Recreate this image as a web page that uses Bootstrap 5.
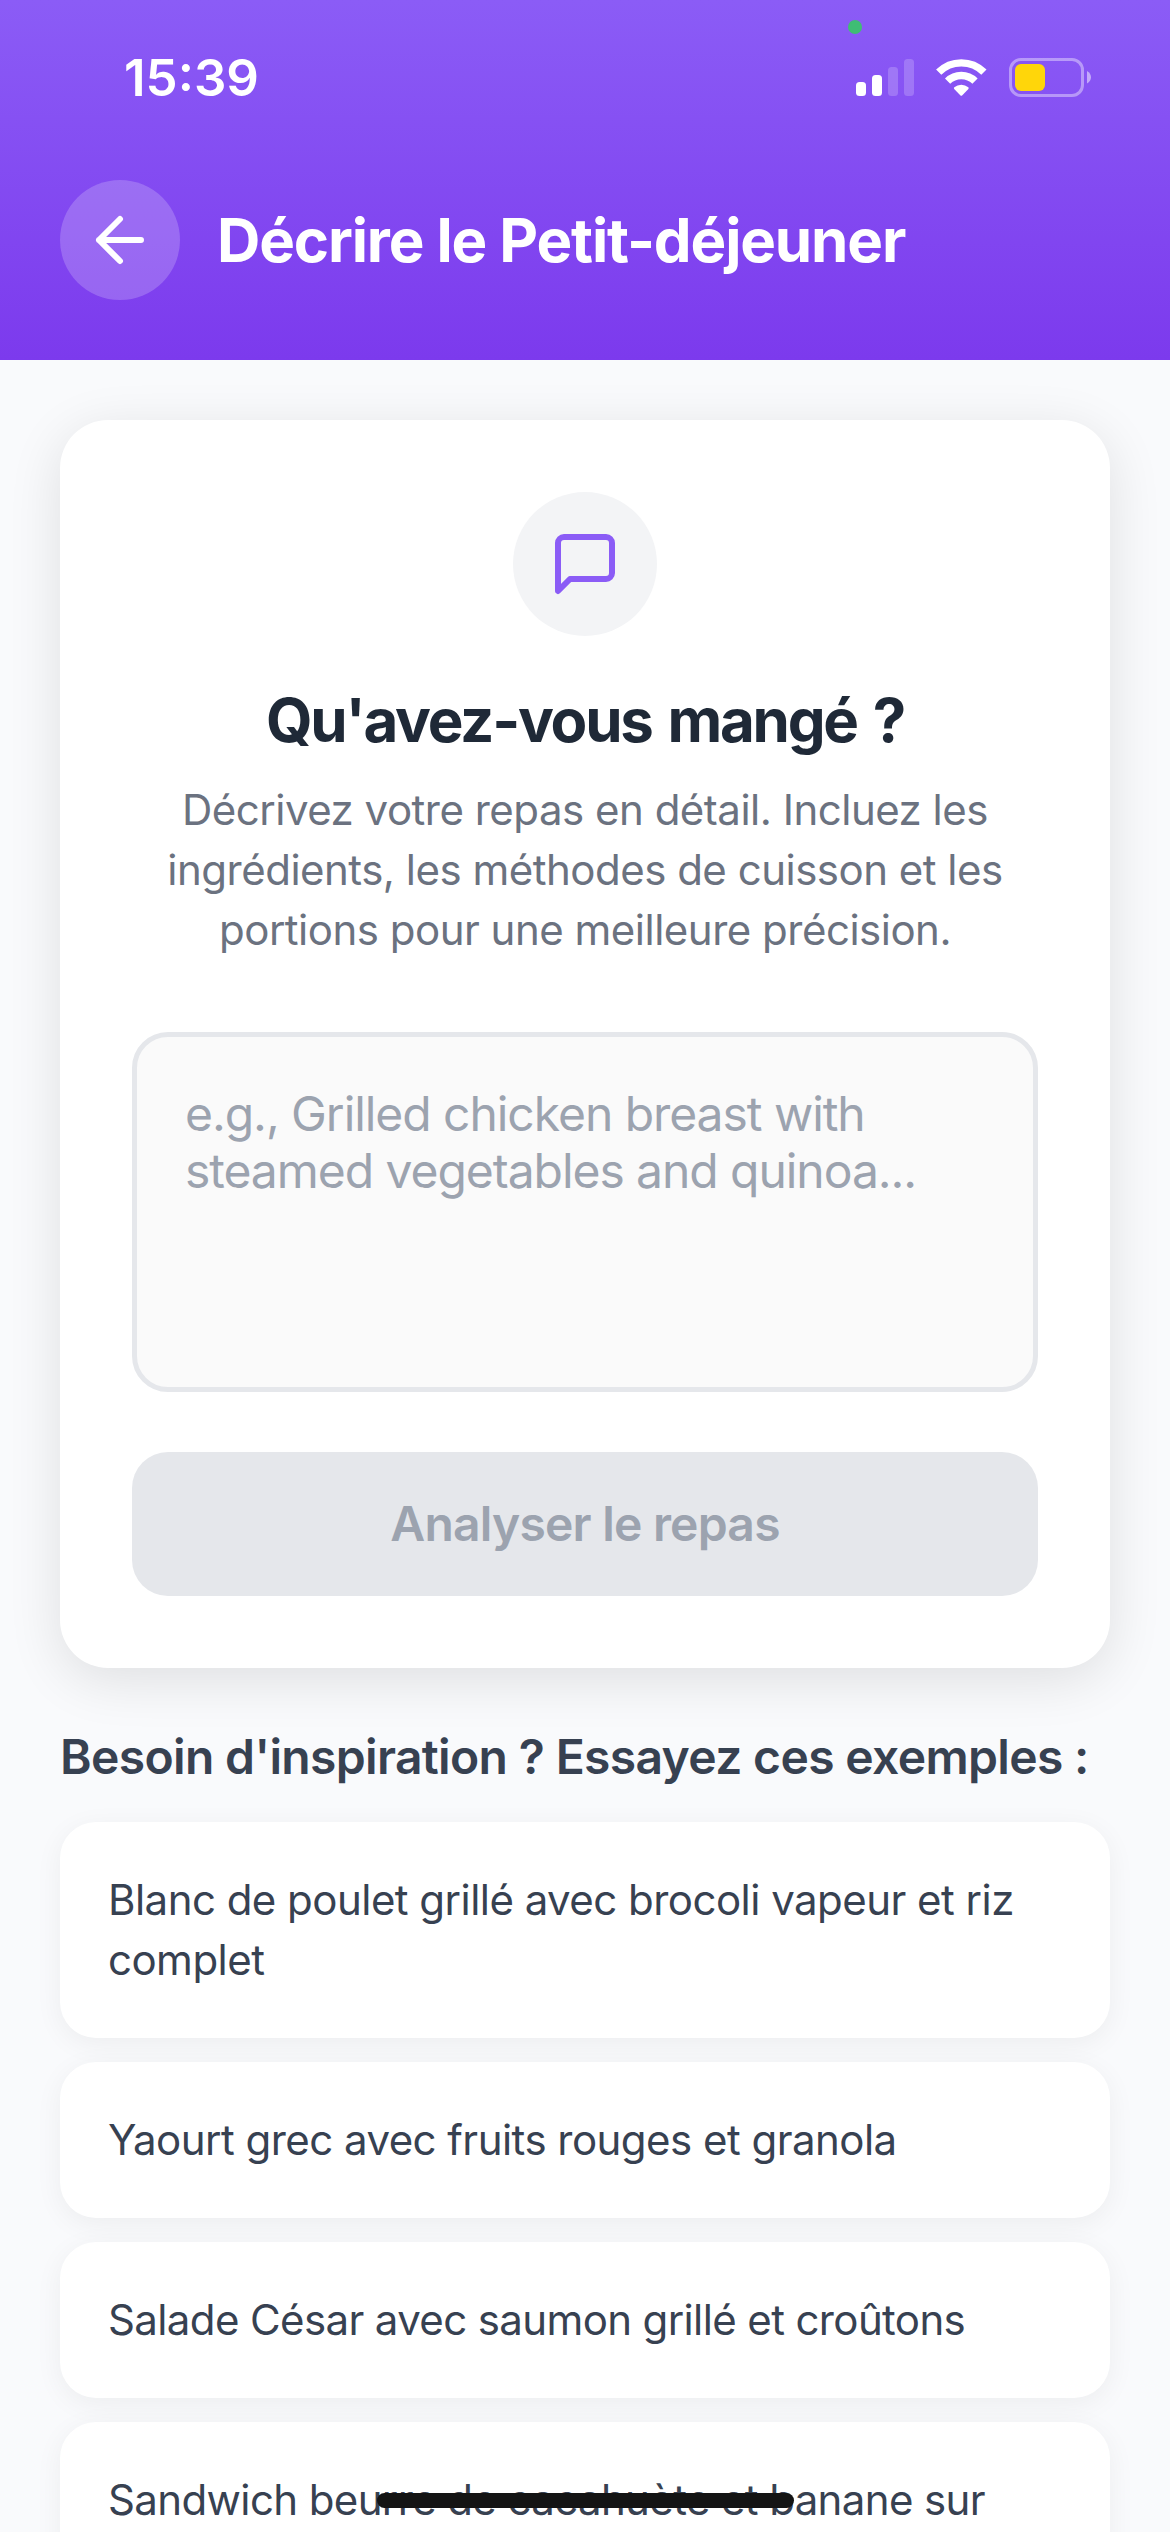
<!DOCTYPE html>
<html lang="fr">
<head>
<meta charset="utf-8">
<meta name="viewport" content="width=device-width, initial-scale=1">
<title>Décrire le Petit-déjeuner</title>
<link href="https://cdn.jsdelivr.net/npm/bootstrap@5.3.0/dist/css/bootstrap.min.css" rel="stylesheet">
<style>
  body { font-family: Inter, "Liberation Sans", sans-serif; background: #f9fafc; }
  .screen { width: 1170px; height: 2532px; }
  .app-header { height: 360px; background: linear-gradient(180deg, #8b5cf6, #7c3aed); }
  .status-row { height: 156px; padding: 0 79px 0 124px; margin-bottom: 24px; }
  .clock { font-size: 51px; line-height: 60px; font-weight: 600; }
  .live-dot { top: 20px; left: 848px; width: 14px; height: 14px; background: #3fbd74; }
  .title-row { padding: 0 60px; gap: 37px; }
  .back-btn { width: 120px; height: 120px; background: rgba(255,255,255,.2); }
  .page-title { font-size: 60px; line-height: 72px; letter-spacing: -1.13px; }
  .content { padding: 60px; }
  .meal-card { padding: 72px; border-radius: 48px; box-shadow: 0 12px 54px rgba(0,0,0,.11); }
  .icon-disc { width: 144px; height: 144px; background: #f3f4f6; margin-bottom: 48px; }
  .meal-heading { font-size: 60px; line-height: 72px; letter-spacing: -2.25px; word-spacing: 3.900px; color: #1f2937; margin-bottom: 24px; }
  .meal-help { font-size: 42px; line-height: 60px; letter-spacing: -.5px; color: #6b7280; margin-bottom: 72px; }
  .meal-input.form-control { height: 360px; padding: 48px; border: 5px solid #e5e7eb; border-radius: 36px; background: #fafafa; font-size: 48px; line-height: 57px; letter-spacing: -1.05px; resize: none; margin-bottom: 60px; overflow: hidden; }
  .meal-input::placeholder { color: #9ca3af; opacity: 1; }
  .analyse.btn, .analyse.btn:disabled { height: 144px; border: 0; border-radius: 36px; background: #e5e7eb; color: #9ca3af; opacity: 1; font-size: 48px; font-weight: 600; letter-spacing: -.78px; }
  .section-title { font-size: 48px; line-height: 58px; font-weight: 600; letter-spacing: -.65px; color: #374151; margin: 60px 0 36px; }
  .examples { gap: 24px; }
  .example { padding: 48px; border-radius: 36px; font-size: 42px; line-height: 60px; letter-spacing: -.53px; color: #374151; box-shadow: 0 6px 28px rgba(0,0,0,.055); }
  .example:nth-child(n+3) { letter-spacing: -.62px; }
  .home-bar { left: 377px; top: 2493px; width: 417px; height: 15px; background: #141414; }
</style>
</head>
<body>
<div class="screen position-relative overflow-hidden">
  <header class="app-header text-white">
    <div class="live-dot position-absolute rounded-circle"></div>
    <div class="status-row d-flex justify-content-between align-items-center">
      <span class="clock">15:39</span>
      <svg width="235" height="40" viewBox="856 58 235 40" fill="#fff" aria-hidden="true">
        <rect x="856" y="82" width="10" height="14" rx="3.5"/>
        <rect x="872" y="75" width="10" height="21" rx="3.5"/>
        <rect x="888" y="67" width="10" height="29" rx="3.5" opacity=".2"/>
        <rect x="904" y="59" width="10" height="37" rx="3.5" opacity=".2"/>
        <g fill="none" stroke="#fff" stroke-width="7.4">
          <path d="M938.7 72.2A32 32 0 0 1 983.9 72.2"/>
          <path d="M947.6 81.1A19.4 19.4 0 0 1 975 81.1"/>
        </g>
        <path d="M954.2 88.9a1.2 1.2 0 0 1 .1-1.6a11 11 0 0 1 14 0a1.2 1.2 0 0 1 .1 1.6l-6.3 6.6a1.2 1.2 0 0 1-1.6 0z"/>
        <rect x="1010.5" y="59.5" width="72" height="36" rx="10.5" fill="none" stroke="#fff" stroke-width="3" opacity=".4"/>
        <rect x="1015" y="64" width="30" height="27" rx="6" fill="#ffd60a"/>
        <path d="M1087 71c5.300 2.500 5.300 10 0 12.500z" opacity=".5"/>
      </svg>
    </div>
    <div class="title-row d-flex align-items-center">
      <div class="back-btn rounded-circle d-flex align-items-center justify-content-center flex-shrink-0">
        <svg width="72" height="72" viewBox="0 0 24 24" fill="none" stroke="#fff" stroke-width="2" stroke-linecap="round" stroke-linejoin="round"><path d="M19 12H5M12 19l-7-7 7-7"/></svg>
      </div>
      <h1 class="page-title fw-bold mb-0">Décrire le Petit-déjeuner</h1>
    </div>
  </header>

  <main class="content">
    <section class="meal-card bg-white d-flex flex-column">
      <div class="icon-disc rounded-circle d-flex align-items-center justify-content-center align-self-center">
        <svg width="72" height="72" viewBox="0 0 24 24" fill="none" stroke="#8b5cf6" stroke-width="2" stroke-linecap="round" stroke-linejoin="round"><path d="M21 15a2 2 0 0 1-2 2H7l-4 4V5a2 2 0 0 1 2-2h14a2 2 0 0 1 2 2z"/></svg>
      </div>
      <h2 class="meal-heading fw-bold text-center">Qu'avez-vous mangé ?</h2>
      <p class="meal-help text-center">Décrivez votre repas en détail. Incluez les<br>ingrédients, les méthodes de cuisson et les<br>portions pour une meilleure précision.</p>
      <textarea class="meal-input form-control" placeholder="e.g., Grilled chicken breast with steamed vegetables and quinoa..."></textarea>
      <button class="analyse btn w-100" type="button" disabled>Analyser le repas</button>
    </section>

    <h3 class="section-title text-nowrap">Besoin d'inspiration ? Essayez ces exemples :</h3>
    <div class="examples d-flex flex-column">
      <div class="example bg-white">Blanc de poulet grillé avec brocoli vapeur et riz complet</div>
      <div class="example bg-white">Yaourt grec avec fruits rouges et granola</div>
      <div class="example bg-white">Salade César avec saumon grillé et croûtons</div>
      <div class="example bg-white">Sandwich beurre de cacahuète et banane sur</div>
    </div>
  </main>
  <div class="home-bar position-absolute rounded-pill"></div>
</div>
<script src="https://cdn.jsdelivr.net/npm/bootstrap@5.3.0/dist/js/bootstrap.bundle.min.js"></script>
</body>
</html>
